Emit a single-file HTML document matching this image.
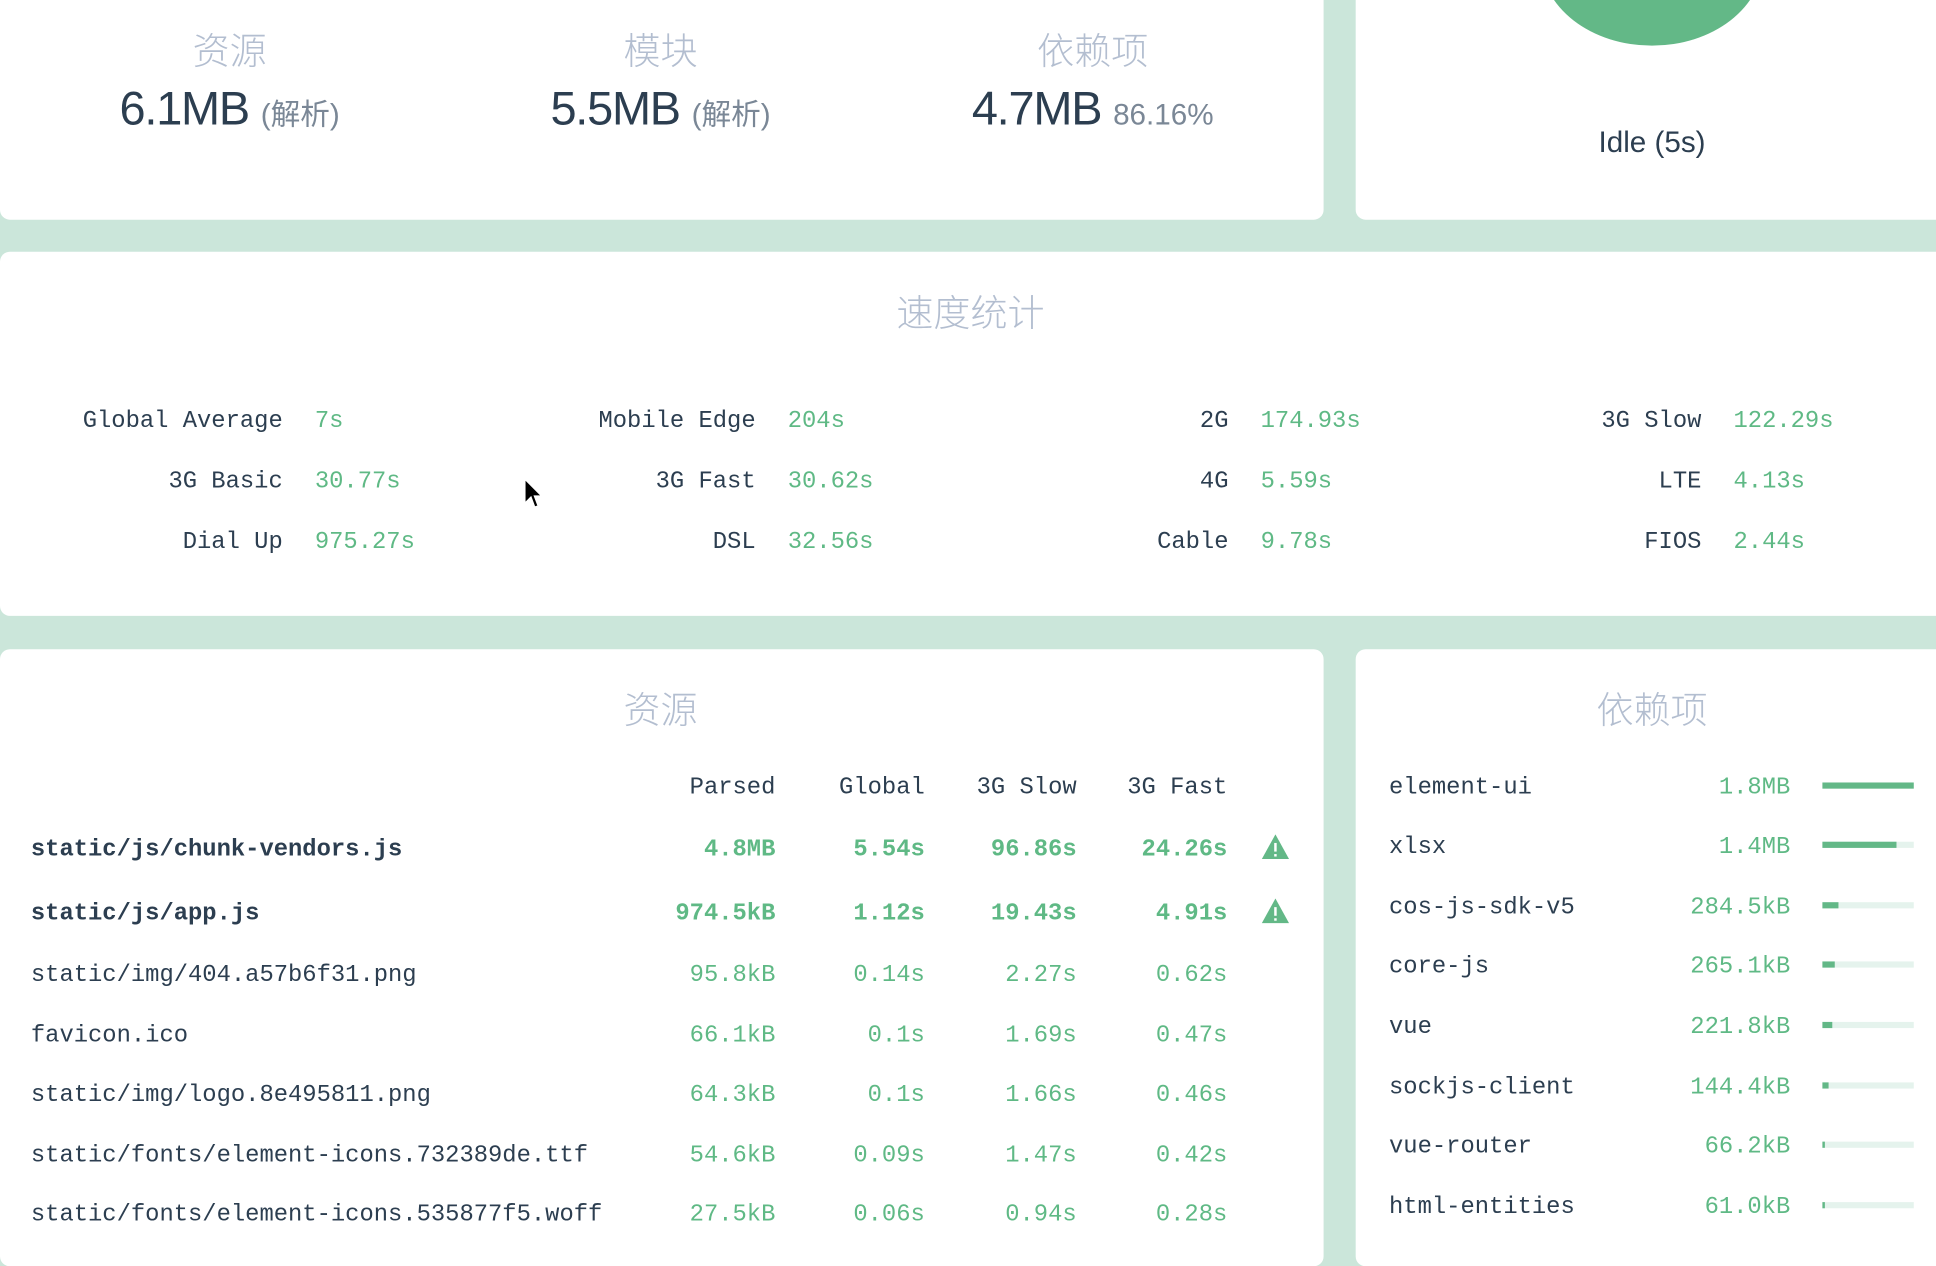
<!DOCTYPE html>
<html><head><meta charset="utf-8"><style>
html,body{margin:0;padding:0;width:1936px;height:1228px;overflow:hidden;background:#cbe6da;}
#w{position:absolute;left:0;top:0;width:1568px;height:995px;transform:scale(1.23469,1.2342);transform-origin:0 0;}
.card{position:absolute;background:#fff;border-radius:8px;}
.abs{position:absolute;white-space:nowrap;}
.t{font-family:"Liberation Sans","Noto Sans CJK SC",sans-serif;color:#b3bed0;font-size:30px;font-weight:300;transform:translateX(-50%);}
.big{font-family:"Liberation Sans","Noto Sans CJK SC",sans-serif;color:#2c3e50;font-size:38px;transform:translateX(-50%);letter-spacing:-1px;}
.big small{font-size:24px;color:#7a8796;letter-spacing:0;}
.m{font-family:"Liberation Mono",monospace;font-size:19.3px;color:#2c3e50;}
.g{color:#5fb985;}
.r{text-align:right;}
.b{font-weight:bold;}
</style></head><body><div id="w">
<div class="card" style="left:0;top:-20px;width:1072px;height:198px"></div>
<div class="card" style="left:1098px;top:-20px;width:490px;height:198px;overflow:hidden">
<div style="position:absolute;left:150px;top:-83px;width:180px;height:140px;border-radius:50%;background:#63b887"></div></div>
<div class="abs" style="left:1338px;top:102px;transform:translateX(-50%);font-family:'Liberation Sans',sans-serif;font-size:24px;color:#2c3e50">Idle (5s)</div>
<div class="abs t" style="left:186px;top:17px">资源</div>
<div class="abs t" style="left:535px;top:17px">模块</div>
<div class="abs t" style="left:885px;top:17px">依赖项</div>
<div class="abs big" style="left:186px;top:68px">6.1MB <small>(解析)</small></div>
<div class="abs big" style="left:535px;top:68px">5.5MB <small>(解析)</small></div>
<div class="abs big" style="left:885px;top:68px">4.7MB <small>86.16%</small></div>

<div class="card" style="left:0;top:204px;width:1588px;height:295px"></div>
<div class="abs t" style="left:786px;top:229px">速度统计</div>
<div id="sp"></div>

<div class="card" style="left:0;top:526px;width:1072px;height:500px"></div>
<div class="card" style="left:1098px;top:526px;width:490px;height:500px"></div>
<div class="abs t" style="left:535px;top:551px">资源</div>
<div class="abs t" style="left:1338px;top:551px">依赖项</div>
<div id="rs"></div>
<svg class="abs" style="left:423px;top:387px" width="18" height="28" viewBox="0 0 18 28"><path d="M2 1 L2 21 L7 16 L10 24 L13 23 L10 15 L16 15 Z" fill="#000" stroke="#fff" stroke-width="1.3"/></svg>
</div>
<script>
var sp=[["Global Average","7s","Mobile Edge","204s","2G","174.93s","3G Slow","122.29s"],["3G Basic","30.77s","3G Fast","30.62s","4G","5.59s","LTE","4.13s"],["Dial Up","975.27s","DSL","32.56s","Cable","9.78s","FIOS","2.44s"]];
var h="",ys=[330,379,428];
sp.forEach(function(r,i){for(var c=0;c<4;c++){var x=c*383;h+='<div class="abs m r" style="left:'+(x)+'px;width:'+229+'px;top:'+ys[i]+'px">'+r[c*2]+'</div><div class="abs m g" style="left:'+(x+255)+'px;top:'+ys[i]+'px">'+r[c*2+1]+'</div>';}});
document.getElementById("sp").innerHTML=h;
var rows=[["Parsed","Global","3G Slow","3G Fast",627,0,0],["static/js/chunk-vendors.js","4.8MB","5.54s","96.86s","24.26s",677,1,1],["static/js/app.js","974.5kB","1.12s","19.43s","4.91s",729,1,1],["static/img/404.a57b6f31.png","95.8kB","0.14s","2.27s","0.62s",779],["favicon.ico","66.1kB","0.1s","1.69s","0.47s",828],["static/img/logo.8e495811.png","64.3kB","0.1s","1.66s","0.46s",876],["static/fonts/element-icons.732389de.ttf","54.6kB","0.09s","1.47s","0.42s",925],["static/fonts/element-icons.535877f5.woff","27.5kB","0.06s","0.94s","0.28s",973]];
h="";var rx=[628,749,872,994];
rows.forEach(function(r,i){
 if(i==0){for(var c=0;c<4;c++)h+='<div class="abs m r" style="left:'+(rx[c]-150)+'px;width:150px;top:627px">'+r[c]+'</div>';return;}
 var y=r[5],b=r[6]?' b':'';
 h+='<div class="abs m'+b+'" style="left:25px;top:'+y+'px">'+r[0]+'</div>';
 for(var c=0;c<4;c++)h+='<div class="abs m g r'+b+'" style="left:'+(rx[c]-150)+'px;width:150px;top:'+y+'px">'+r[c+1]+'</div>';
 if(r[7])h+='<svg class="abs" style="left:1021px;top:'+(y-2)+'px" width="24" height="22" viewBox="0 0 24 22"><path d="M12 1 L23 21 L1 21 Z" fill="#63b887"/><rect x="11" y="8" width="2" height="7" fill="#fff"/><rect x="11" y="17" width="2" height="2" fill="#fff"/></svg>';
});
var dep=[["element-ui","1.8MB",74],["xlsx","1.4MB",60],["cos-js-sdk-v5","284.5kB",13],["core-js","265.1kB",10],["vue","221.8kB",8],["sockjs-client","144.4kB",5],["vue-router","66.2kB",2],["html-entities","61.0kB",2]];
var dy=[627,675,724,772,821,870,918,967];
dep.forEach(function(d,i){var y=dy[i];
 h+='<div class="abs m" style="left:1125px;top:'+y+'px">'+d[0]+'</div><div class="abs m g r" style="left:1300px;width:150px;top:'+y+'px">'+d[1]+'</div>';
 h+='<div class="abs" style="left:1476px;top:'+(y+7)+'px;width:74px;height:5px;background:#e5f3ed"><div style="width:'+d[2]+'px;height:5px;background:#63b887"></div></div>';
});
document.getElementById("rs").innerHTML=h;
</script>
</body></html>
